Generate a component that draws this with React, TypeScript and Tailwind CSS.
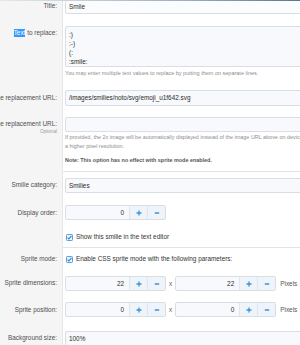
import type { ReactNode } from 'react';

const inputBox = 'rounded-[2px] border border-[#d9dee4] bg-[#f7f9fc] text-[#2b2b2b]';

function Label({ children, className = '', sub }: { children?: ReactNode; className?: string; sub?: string }) {
  return (
    <div className={`flex w-[63px] shrink-0 flex-col items-end border-r border-[#e7e7e7] bg-[#f5f5f5] pr-[5px] ${className}`}>
      {children && <div className="flex justify-end whitespace-nowrap text-[6.4px] leading-[8px] text-[#4f4f4f]">{children}</div>}
      {sub && <div className="mt-[1px] text-[4.6px] leading-[6px] text-[#9a9a9a]">{sub}</div>}
    </div>
  );
}

function Plus() {
  return (
    <svg width="6" height="6" viewBox="0 0 6 6">
      <path d="M3 0.5v5M0.5 3h5" stroke="#3b93dc" strokeWidth="1.3" />
    </svg>
  );
}

function Minus() {
  return (
    <svg width="6" height="6" viewBox="0 0 6 6">
      <path d="M0.8 3h4.4" stroke="#3b93dc" strokeWidth="1.3" />
    </svg>
  );
}

function Spinner({ value }: { value: string }) {
  return (
    <div className={`flex h-[15px] w-[101px] shrink-0 overflow-hidden ${inputBox}`}>
      <div className="flex-1 pr-[5px] text-right text-[6.4px] leading-[13px]">{value}</div>
      <div className="flex w-[18px] items-center justify-center border-l border-[#dfe6ee] bg-[#eef4fa]">
        <Plus />
      </div>
      <div className="flex w-[18px] items-center justify-center border-l border-[#dfe6ee] bg-[#eef4fa]">
        <Minus />
      </div>
    </div>
  );
}

function Check({ children }: { children: ReactNode }) {
  return (
    <div className="flex items-center pl-[1px] text-[6.4px] leading-[8px] text-[#333]">
      <svg width="7" height="7" viewBox="0 0 7 7" className="mr-[3px] shrink-0">
        <rect x="0.5" y="0.5" width="6" height="6" rx="0.8" fill="#eef5fc" stroke="#5a9fd8" />
        <path d="M1.6 3.6l1.3 1.3 2.6-3" fill="none" stroke="#2f86d0" strokeWidth="1.1" />
      </svg>
      {children}
    </div>
  );
}

export default function App() {
  return (
    <div className="h-[345px] w-[300px] overflow-hidden bg-white font-['Liberation_Sans',Arial,sans-serif]">
      <div className="w-[360px]">
        <div className="h-px bg-gradient-to-r from-[#e3e8ec] via-[#9fb0c0] to-[#3c5a74]" />

        {/* Title */}
        <div className="flex h-[19px]">
          <Label className="pt-[1px]">Title:</Label>
          <div className="flex-1 pl-[2px]">
            <div className={`h-[13px] border-t-0 px-[3px] text-[6.4px] leading-[12px] ${inputBox} bg-[#fbfcfe]`}>Smile</div>
          </div>
        </div>

        {/* Text to replace */}
        <div className="flex h-[62px]">
          <Label className="pt-[9px]">
            <span className="bg-[#3399ff] text-white">Text</span>&nbsp;to replace:
          </Label>
          <div className="flex-1 pl-[2px] pt-[6px]">
            <div className={`h-[41px] px-[3px] pt-[3px] text-[6.4px] leading-[9px] ${inputBox}`}>
              <div>:)</div>
              <div>:-)</div>
              <div>(:</div>
              <div>:smile:</div>
            </div>
            <div className="mt-[3px] whitespace-nowrap text-[5.5px] leading-[7px] text-[#8d8d8d]">
              You may enter multiple text values to replace by putting them on separate lines.
            </div>
          </div>
        </div>

        {/* Image replacement URL */}
        <div className="flex h-[29px]">
          <Label className="pt-[12px]">Image replacement URL:</Label>
          <div className="flex-1 pl-[2px] pt-[8px]">
            <div className={`h-[16px] px-[3px] text-[6.4px] leading-[14px] ${inputBox}`}>/images/smilies/noto/svg/emoji_u1f642.svg</div>
          </div>
        </div>

        {/* 2x image */}
        <div className="flex h-[57px]">
          <Label className="pt-[9px]" sub="Optional">2x image replacement URL:</Label>
          <div className="flex-1 pl-[2px] pt-[6px]">
            <div className={`h-[15px] ${inputBox}`} />
            <div className="mt-[1px] whitespace-nowrap text-[5.45px] leading-[9px] text-[#8d8d8d]">
              If provided, the 2x image will be automatically displayed instead of the image URL above on devices with
              <br />a higher pixel resolution.
            </div>
            <div className="mt-[5px] whitespace-nowrap text-[5.4px] font-bold leading-[9px] text-[#555]">
              Note: This option has no effect with sprite mode enabled.
            </div>
          </div>
        </div>

        {/* separator */}
        <div className="flex h-[7px]">
          <Label />
          <div className="flex-1 pt-[3px]">
            <div className="h-px bg-[#e3e3e3]" />
          </div>
        </div>

        {/* Smilie category */}
        <div className="flex h-[24px]">
          <Label className="pt-[6px]">Smilie category:</Label>
          <div className="flex-1 pl-[2px] pt-[3px]">
            <div className={`h-[15px] px-[3px] text-[6.4px] leading-[13px] ${inputBox}`}>Smilies</div>
          </div>
        </div>

        {/* Display order */}
        <div className="flex h-[26px]">
          <Label className="pt-[10px]">Display order:</Label>
          <div className="flex-1 pl-[2px] pt-[6px]">
            <Spinner value="0" />
          </div>
        </div>

        {/* show in editor */}
        <div className="flex h-[19px]">
          <Label />
          <div className="flex-1 pl-[2px] pt-[8px]">
            <Check>Show this smilie in the text editor</Check>
          </div>
        </div>

        {/* separator */}
        <div className="flex h-[6px]">
          <Label />
          <div className="flex-1 pt-[3px]">
            <div className="h-px bg-[#e3e3e3]" />
          </div>
        </div>

        {/* Sprite mode */}
        <div className="flex h-[18px]">
          <Label className="pt-[5px]">Sprite mode:</Label>
          <div className="flex-1 pl-[2px] pt-[5px]">
            <Check>Enable CSS sprite mode with the following parameters:</Check>
          </div>
        </div>

        {/* Sprite dimensions */}
        <div className="flex h-[29px]">
          <Label className="pt-[11px]">Sprite dimensions:</Label>
          <div className="flex flex-1 items-start pl-[2px] pt-[8px]">
            <Spinner value="22" />
            <span className="mx-[3px] text-[6.4px] leading-[15px] text-[#666]">x</span>
            <Spinner value="22" />
            <span className="ml-[4px] text-[6.4px] leading-[15px] text-[#555]">Pixels</span>
          </div>
        </div>

        {/* Sprite position */}
        <div className="flex h-[28px]">
          <Label className="pt-[9px]">Sprite position:</Label>
          <div className="flex flex-1 items-start pl-[2px] pt-[5px]">
            <Spinner value="0" />
            <span className="mx-[3px] text-[6.4px] leading-[15px] text-[#666]">x</span>
            <Spinner value="0" />
            <span className="ml-[4px] text-[6.4px] leading-[15px] text-[#555]">Pixels</span>
          </div>
        </div>

        {/* Background size */}
        <div className="flex h-[30px]">
          <Label className="pt-[9px]">Background size:</Label>
          <div className="flex-1 pl-[2px] pt-[6px]">
            <div className={`h-[16px] px-[3px] text-[6.4px] leading-[14px] ${inputBox}`}>100%</div>
          </div>
        </div>
      </div>
    </div>
  );
}
